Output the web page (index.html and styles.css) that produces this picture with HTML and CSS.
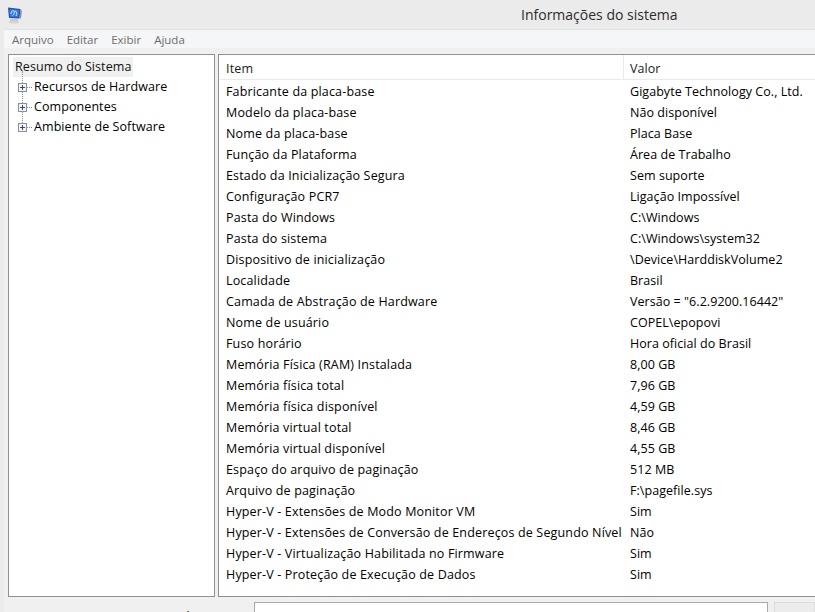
FILE: index.html
```html
<!DOCTYPE html>
<html lang="pt-BR">
<head>
<meta charset="utf-8">
<title>Informações do sistema</title>
<link rel="stylesheet" href="styles.css">
</head>
<body>
<div class="window">
  <header class="titlebar">
    <svg class="app-icon" width="16" height="18" viewBox="0 0 16 18">
      <rect x="3" y="13" width="8" height="2" fill="#c8c8c8"/>
      <ellipse cx="7" cy="16" rx="5" ry="1.5" fill="#d4d4d4"/>
      <path d="M1 1.5 13.5 3 12.5 12.5 2 12Z" fill="#2a4fb0"/>
      <path d="M2.5 3 12 4 11.3 11 3 10.7Z" fill="#2f7fdc"/>
      <path d="M4 8c0-3 2-4 3-3s0 4-1.500 4.500M8 5c2 0 2.500 3 1 5" fill="none" stroke="#d6e8fa" stroke-width="1"/>
      <path d="M13.500 3 15 5 14 12.500 12.500 12.500Z" fill="#8e97a8"/>
    </svg>
    <h1 class="title">Informações do sistema</h1>
  </header>
  <nav class="menubar">
    <span>Arquivo</span><span>Editar</span><span>Exibir</span><span>Ajuda</span>
  </nav>
  <main class="panes">
    <section class="tree">
      <div class="tree-root"><span>Resumo do Sistema</span></div>
      <ul class="tree-list">
        <li><i class="expander"></i>Recursos de Hardware</li>
        <li><i class="expander"></i>Componentes</li>
        <li><i class="expander"></i>Ambiente de Software</li>
      </ul>
    </section>
    <section class="details">
      <div class="row head"><div class="c1">Item</div><div class="c2">Valor</div></div>
      <div class="row"><div class="c1">Fabricante da placa-base</div><div class="c2">Gigabyte Technology Co., Ltd.</div></div>
      <div class="row"><div class="c1">Modelo da placa-base</div><div class="c2">Não disponível</div></div>
      <div class="row"><div class="c1">Nome da placa-base</div><div class="c2">Placa Base</div></div>
      <div class="row"><div class="c1">Função da Plataforma</div><div class="c2">Área de Trabalho</div></div>
      <div class="row"><div class="c1">Estado da Inicialização Segura</div><div class="c2">Sem suporte</div></div>
      <div class="row"><div class="c1">Configuração PCR7</div><div class="c2">Ligação Impossível</div></div>
      <div class="row"><div class="c1">Pasta do Windows</div><div class="c2">C:\Windows</div></div>
      <div class="row"><div class="c1">Pasta do sistema</div><div class="c2">C:\Windows\system32</div></div>
      <div class="row"><div class="c1">Dispositivo de inicialização</div><div class="c2">\Device\HarddiskVolume2</div></div>
      <div class="row"><div class="c1">Localidade</div><div class="c2">Brasil</div></div>
      <div class="row"><div class="c1">Camada de Abstração de Hardware</div><div class="c2">Versão = "6.2.9200.16442"</div></div>
      <div class="row"><div class="c1">Nome de usuário</div><div class="c2">COPEL\epopovi</div></div>
      <div class="row"><div class="c1">Fuso horário</div><div class="c2">Hora oficial do Brasil</div></div>
      <div class="row"><div class="c1">Memória Física (RAM) Instalada</div><div class="c2">8,00 GB</div></div>
      <div class="row"><div class="c1">Memória física total</div><div class="c2">7,96 GB</div></div>
      <div class="row"><div class="c1">Memória física disponível</div><div class="c2">4,59 GB</div></div>
      <div class="row"><div class="c1">Memória virtual total</div><div class="c2">8,46 GB</div></div>
      <div class="row"><div class="c1">Memória virtual disponível</div><div class="c2">4,55 GB</div></div>
      <div class="row"><div class="c1">Espaço do arquivo de paginação</div><div class="c2">512 MB</div></div>
      <div class="row"><div class="c1">Arquivo de paginação</div><div class="c2">F:\pagefile.sys</div></div>
      <div class="row"><div class="c1">Hyper-V - Extensões de Modo Monitor VM</div><div class="c2">Sim</div></div>
      <div class="row"><div class="c1">Hyper-V - Extensões de Conversão de Endereços de Segundo Nível</div><div class="c2">Não</div></div>
      <div class="row"><div class="c1">Hyper-V - Virtualização Habilitada no Firmware</div><div class="c2">Sim</div></div>
      <div class="row"><div class="c1">Hyper-V - Proteção de Execução de Dados</div><div class="c2">Sim</div></div>
    </section>
  </main>
  <footer class="searchbar">
    <label class="search-label">Localizar:</label>
    <div class="search-input"></div>
    <div class="search-button"></div>
  </footer>
</div>
</body>
</html>
```

FILE: styles.css
```css
html, body {
  margin: 0;
  height: 100%;
  overflow: hidden;
  background: #ebebeb;
}
.window {
  width: 815px;
  height: 612px;
  overflow: hidden;
  display: flex;
  flex-direction: column;
  font-family: "Open Sans", "Noto Sans", sans-serif;
  font-size: 12.5px;
  letter-spacing: 0.14px;
  color: #000;
}
.titlebar {
  height: 29px;
  flex: none;
  position: relative;
  display: flex;
  align-items: flex-start;
  padding: 6px 0 0 7px;
  box-sizing: border-box;
}
.app-icon { flex: none; }
.title {
  margin: 0;
  position: absolute;
  left: 521px;
  top: 5px;
  font-size: 14px;
  letter-spacing: 0;
  line-height: 20px;
  font-weight: 400;
  color: #2b2b2b;
  white-space: nowrap;
}
.menubar {
  margin-left: 4px;
  height: 19px;
  flex: none;
  display: flex;
  gap: 13px;
  align-items: center;
  padding: 0 0 0 8px;
  box-sizing: border-box;
  background: #f5f6f7;
  border-top: 1px solid #e2e2e2;
  color: #6d6d6d;
  font-size: 11.5px;
  letter-spacing: 0;
}
.panes {
  margin-left: 4px;
  flex: none;
  height: 549px;
  display: flex;
  gap: 3px;
  padding: 6px 0 0 4px;
  box-sizing: border-box;
  background: #f0f0f0;
}
.tree, .details {
  height: 543px;
  box-sizing: border-box;
  background: #fff;
  border: 1px solid #8f8f8f;
}
.tree {
  width: 207px;
  flex: none;
  padding: 2px 0 0 4px;
  letter-spacing: 0.08px;
}
.tree-root {
  height: 20px;
  line-height: 20px;
}
.tree-root span {
  display: inline-block;
  background: #f0f0f0;
  padding: 0 2px;
  color: #111;
}
.tree-list {
  list-style: none;
  margin: 0;
  padding: 0;
}
.tree-list li {
  height: 20px;
  line-height: 20px;
  display: flex;
  align-items: center;
  padding-left: 21px;
  position: relative;
}
.tree-list li::before {
  content: "";
  position: absolute;
  left: 9px;
  top: -6px;
  height: 16px;
  border-left: 1px dotted #909090;
}
.tree-list li::after {
  content: "";
  position: absolute;
  left: 14px;
  top: 10px;
  width: 5px;
  border-top: 1px dotted #909090;
}
.expander {
  position: absolute;
  left: 5px;
  top: 6px;
  width: 9px;
  height: 9px;
  box-sizing: border-box;
  border: 1px solid #8e8f8f;
  z-index: 1;
  background:
    linear-gradient(#2b4a8c, #2b4a8c) center / 5px 1px no-repeat,
    linear-gradient(#2b4a8c, #2b4a8c) center / 1px 5px no-repeat,
    #f4f4f4;
}
.details {
  flex: 1;
  min-width: 0;
  border-right: none;
  margin-right: -2px;
  overflow: hidden;
}
.row {
  display: flex;
  height: 21px;
  line-height: 21px;
  white-space: nowrap;
}
.c1 {
  width: 404px;
  flex: none;
  padding-left: 7px;
  box-sizing: border-box;
  letter-spacing: 0.16px;
}
.c2 {
  flex: 1;
  padding-left: 7px;
  letter-spacing: 0.05px;
}
.head {
  height: 24px;
  line-height: 28px;
  margin-left: 1px;
  margin-bottom: 1px;
  border-bottom: 1px solid #e5ebf2;
  color: #222;
}
.head .c1 {
  width: 404px;
  padding-left: 6px;
  border-right: 1px solid #e5ebf2;
}
.head .c2 {
  padding-left: 6px;
}
.searchbar {
  margin-left: 4px;
  flex: 1;
  background: #f0f0f0;
  display: flex;
  padding: 5px 0 0;
  box-sizing: border-box;
}
.search-label {
  width: 250px;
  flex: none;
  padding-left: 155px;
  box-sizing: border-box;
  line-height: 16px;
  margin-top: 7px;
  white-space: nowrap;
}
.search-input {
  width: 514px;
  height: 20px;
  flex: none;
  box-sizing: border-box;
  background: #fff;
  border: 1px solid #a9a9a9;
}
.search-button {
  margin-left: 6px;
  flex: 1;
  height: 20px;
  background: #ececec;
  border: 1px solid #dcdcdc;
}
```
